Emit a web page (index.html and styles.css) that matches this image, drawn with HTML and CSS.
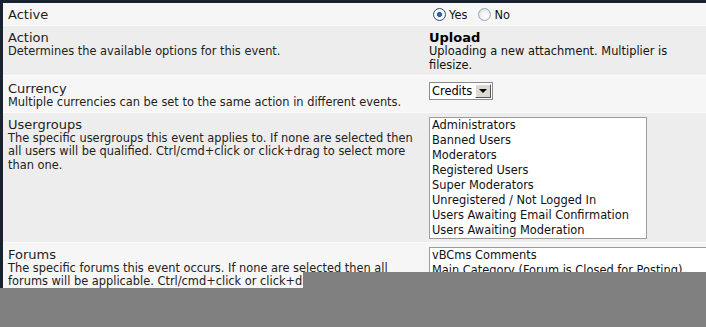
FILE: index.html
```html
<!DOCTYPE html>
<html lang="en">
<head>
<meta charset="utf-8">
<title>Event settings</title>
<link rel="stylesheet" href="styles.css">
</head>
<body>
<div class="page">
  <div class="form">
    <div class="row alt1">
      <div class="label"><div class="title">Active</div></div>
      <div class="field field-radios">
        <label class="radio"><input type="radio" name="active" checked><span>Yes</span></label>
        <label class="radio"><input type="radio" name="active"><span>No</span></label>
      </div>
    </div>
    <div class="row alt2">
      <div class="label">
        <div class="title">Action</div>
        <div class="desc">Determines the available options for this event.</div>
      </div>
      <div class="field">
        <div class="title strong">Upload</div>
        <div class="desc">Uploading a new attachment. Multiplier is filesize.</div>
      </div>
    </div>
    <div class="row alt1 row-currency">
      <div class="label">
        <div class="title">Currency</div>
        <div class="desc">Multiple currencies can be set to the same action in different events.</div>
      </div>
      <div class="field">
        <div class="dropdown"><span class="dropdown-value">Credits</span><span class="dropdown-btn"><span class="arrow"></span></span></div>
      </div>
    </div>
    <div class="row alt2">
      <div class="label">
        <div class="title">Usergroups</div>
        <div class="desc">The specific usergroups this event applies to. If none are selected then all users will be qualified. Ctrl/cmd+click or click+drag to select more than one.</div>
      </div>
      <div class="field">
        <div class="listbox listbox-groups" role="listbox">
          <div class="option">Administrators</div>
          <div class="option">Banned Users</div>
          <div class="option">Moderators</div>
          <div class="option">Registered Users</div>
          <div class="option">Super Moderators</div>
          <div class="option">Unregistered / Not Logged In</div>
          <div class="option">Users Awaiting Email Confirmation</div>
          <div class="option">Users Awaiting Moderation</div>
        </div>
      </div>
    </div>
    <div class="row alt1">
      <div class="label">
        <div class="title">Forums</div>
        <div class="desc">The specific forums this event occurs. If none are selected then all forums will be applicable. Ctrl/cmd+click or click+drag to select more than one.</div>
      </div>
      <div class="field">
        <div class="listbox listbox-forums" role="listbox">
          <div class="option">vBCms Comments</div>
          <div class="option">Main Category (Forum is Closed for Posting)</div>
          <div class="option">Main Forum</div>
        </div>
      </div>
    </div>
  </div>
  <div class="overlay overlay-main"></div>
  <div class="overlay overlay-notch"></div>
</div>
</body>
</html>
```
FILE: styles.css
```css
html, body {
  margin: 0;
  padding: 0;
  background: #808080;
}
body {
  font-family: "DejaVu Sans", Verdana, sans-serif;
  color: #222;
}
.page {
  position: relative;
  width: 706px;
  height: 327px;
  overflow: hidden;
  background: #f6f6f6;
}
.form {
  border-left: 3px solid #18232f;
  border-top: 3px solid #18232f;
  width: 760px;
}
.row {
  display: grid;
  grid-template-columns: 426px 1fr;
  border-bottom: 1px solid #fbfbfb;
}
.alt1 { background: #f6f6f6; }
.alt2 { background: #ededed; }
.label {
  padding: 4px 12px 3px 5px;
}
.row-currency .label {
  padding-top: 5px;
  padding-bottom: 2px;
}
.field {
  padding: 4px 0 3px 0;
  width: 272px;
}
.title {
  font-size: 13px;
  line-height: 15px;
  color: #1e1e1e;
}
.title.strong {
  font-weight: bold;
  color: #000;
}
.desc {
  font-size: 11.4px;
  line-height: 13.5px;
  color: #222;
}
.field .desc { color: #111; }

.field-radios {
  display: flex;
  align-items: center;
  gap: 11px;
  height: 15px;
  padding-left: 4px;
  font-size: 11.4px;
}
.radio {
  display: flex;
  align-items: center;
  gap: 3px;
  color: #111;
}
.radio input {
  appearance: none;
  -webkit-appearance: none;
  margin: 0;
  width: 13px;
  height: 13px;
  border-radius: 50%;
  border: 1px solid #9aa7b2;
  background: radial-gradient(circle at 60% 65%, #ffffff 0, #f2f2f2 45%, #cfd3d6 100%);
  box-sizing: border-box;
}
.radio input:checked {
  border-color: #2f4f6f;
  background: radial-gradient(circle, #3a76b5 0, #24568c 28%, #e8edf2 34%, #ffffff 60%, #c9d0d6 100%);
}

.dropdown {
  display: inline-flex;
  align-items: center;
  margin-top: 1px;
  height: 18px;
  box-sizing: border-box;
  border: 1px solid #8c8c8c;
  background: #fff;
  font-size: 11.4px;
  color: #000;
}
.dropdown-value {
  padding: 0 2px 0 2px;
}
.dropdown-btn {
  width: 16px;
  height: 14px;
  margin: 0 1px;
  box-sizing: border-box;
  background: #dcd9d2;
  border: 1px solid;
  border-color: #ffffff #555555 #555555 #ffffff;
  display: flex;
  align-items: center;
  justify-content: center;
}
.arrow {
  width: 0;
  height: 0;
  border-left: 4px solid transparent;
  border-right: 4px solid transparent;
  border-top: 4px solid #000;
}

.listbox {
  box-sizing: border-box;
  border: 1px solid #9c9c9c;
  background: #fff;
  font-size: 11.4px;
  line-height: 15px;
  color: #111;
  overflow: hidden;
}
.listbox-groups {
  width: 218px;
  height: 122px;
}
.listbox-forums {
  width: 300px;
  height: 80px;
}
.option {
  padding: 0 2px;
  white-space: nowrap;
}

.overlay {
  position: absolute;
  background: #808080;
}
.overlay-main {
  left: 0;
  right: 0;
  top: 288px;
  bottom: 0;
}
.overlay-notch {
  left: 303px;
  right: 0;
  top: 272px;
  height: 16px;
}
```
